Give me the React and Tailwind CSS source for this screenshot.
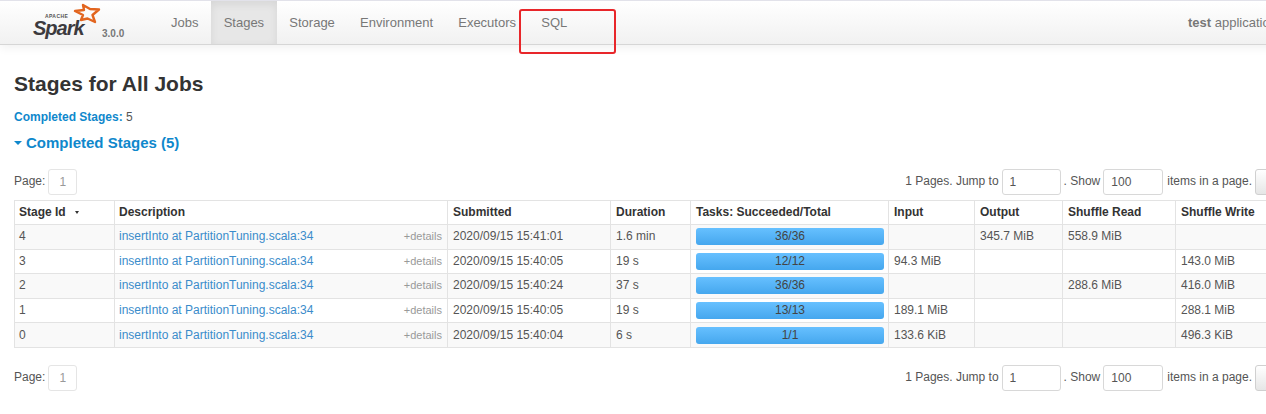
const NAV = ['Jobs', 'Stages', 'Storage', 'Environment', 'Executors', 'SQL']

const ROWS = [
  { id: 4, time: '2020/09/15 15:41:01', dur: '1.6 min', tasks: '36/36', input: '', output: '345.7 MiB', read: '558.9 MiB', write: '' },
  { id: 3, time: '2020/09/15 15:40:05', dur: '19 s', tasks: '12/12', input: '94.3 MiB', output: '', read: '', write: '143.0 MiB' },
  { id: 2, time: '2020/09/15 15:40:24', dur: '37 s', tasks: '36/36', input: '', output: '', read: '288.6 MiB', write: '416.0 MiB' },
  { id: 1, time: '2020/09/15 15:40:05', dur: '19 s', tasks: '13/13', input: '189.1 MiB', output: '', read: '', write: '288.1 MiB' },
  { id: 0, time: '2020/09/15 15:40:04', dur: '6 s', tasks: '1/1', input: '133.6 KiB', output: '', read: '', write: '496.3 KiB' },
]

function SparkLogo() {
  return (
    <svg width="72" height="36" viewBox="0 0 72 36" className="shrink-0">
      <path
        d="M54 2 L61 6 L70 6.5 L63.5 12 L66 19 L58.5 15.5 L52 17 L54 12 L46 8 L55 7 Z"
        fill="none"
        stroke="#e2651f"
        strokeWidth="2.4"
        strokeLinejoin="round"
      />
      <text x="16" y="14.5" fontSize="5" fontWeight="700" fill="#555" fontFamily="Liberation Sans, sans-serif" letterSpacing="0.4">APACHE</text>
      <text x="4" y="32" fontSize="20" fontWeight="700" fontStyle="italic" fill="#3c3a3e" fontFamily="Liberation Sans, sans-serif" letterSpacing="-1">Spark</text>
    </svg>
  )
}

function Navbar() {
  return (
    <div className="relative w-[1320px] h-[45px] flex border-t border-t-[#e2e2ea] border-b border-b-[#d6d6d6] bg-gradient-to-b from-white to-[#f1f1f1] shadow-[0_3px_9px_rgba(0,0,0,0.06)]">
      <div className="flex w-[158.4px] shrink-0 pl-[29px] pt-[2px]">
        <SparkLogo />
        <span className="mt-[23px] ml-[1px] text-[10px] font-bold text-[#777]">3.0.0</span>
      </div>
      {NAV.map((n) => (
        <div
          key={n}
          className={`px-[12.6px] pt-[14px] text-[13px] leading-[15px] text-[#777] ${n === 'Stages' ? 'bg-[#e7e7e7] text-[#555] shadow-[inset_0_3px_8px_rgba(0,0,0,0.08)]' : ''}`}
        >
          {n}
        </div>
      ))}
      <div className="ml-auto w-[132px] pt-[14px] text-[13px] leading-[15px] text-[#777] whitespace-nowrap">
        <b>test</b> application UI
      </div>
    </div>
  )
}

function Pager() {
  return (
    <div className="flex items-center h-[26px] text-[12px] text-[#555]">
      <span className="pb-[2px]">Page:</span>
      <span className="ml-[3px] w-[29px] h-[26px] flex items-center justify-center border border-[#e5e5e5] rounded-[3px] text-[#999]">1</span>
      <span className="ml-auto pb-[2px]">1 Pages. Jump to</span>
      <span className="ml-[3px] w-[59px] h-[26px] pl-[7px] flex items-center border border-[#d8d8d8] rounded-[3px]">1</span>
      <span className="ml-[3px] pb-[2px]">. Show</span>
      <span className="ml-[3px] w-[60px] h-[26px] pl-[7px] flex items-center border border-[#d8d8d8] rounded-[3px]">100</span>
      <span className="ml-[4px] pb-[2px]">items in a page.</span>
      <span className="ml-[3px] w-[59px] h-[26px] border border-[#d0d0d0] rounded-[3px] bg-gradient-to-b from-white to-[#e6e6e6]" />
    </div>
  )
}

const th = 'h-[25px] border border-[#e3e3e3] px-[5px] text-left font-bold text-[#333]'
const td = 'h-[24.6px] border border-[#e3e3e3] px-[5px] text-[#555]'

function StagesTable() {
  return (
    <table className="table-fixed w-[1300px] border-separate border-spacing-0 text-[12px] leading-[15px] rounded-[3px] [&_td]:border-l-0 [&_td]:border-t-0 [&_th]:border-l-0 [&_td:first-child]:border-l [&_th:first-child]:border-l">
      <colgroup>
        <col className="w-[101px]" />
        <col className="w-[333px]" />
        <col className="w-[163px]" />
        <col className="w-[80px]" />
        <col className="w-[198px]" />
        <col className="w-[86px]" />
        <col className="w-[88px]" />
        <col className="w-[113px]" />
        <col className="w-[138px]" />
      </colgroup>
      <thead>
        <tr>
          <th className={`${th} pl-[4px]`}>
            Stage Id
            <span className="inline-block ml-[9px] mb-[2px] w-0 h-0 border-x-[2.5px] border-x-transparent border-t-[3px] border-t-[#333]" />
          </th>
          <th className={`${th} pl-[4px]`}>Description</th>
          <th className={th}>Submitted</th>
          <th className={th}>Duration</th>
          <th className={th}>Tasks: Succeeded/Total</th>
          <th className={th}>Input</th>
          <th className={th}>Output</th>
          <th className={th}>Shuffle Read</th>
          <th className={th}>Shuffle Write</th>
        </tr>
      </thead>
      <tbody>
        {ROWS.map((r, i) => (
          <tr key={r.id} className={i % 2 === 0 ? 'bg-[#f9f9f9]' : 'bg-white'}>
            <td className={`${td} pl-[4px]`}>{r.id}</td>
            <td className={`${td} pl-[4px]`}>
              <div className="flex items-baseline justify-between">
                <span className="text-[#3a8ccb]">insertInto at PartitionTuning.scala:34</span>
                <span className="text-[11px] text-[#999]">+details</span>
              </div>
            </td>
            <td className={td}>{r.time}</td>
            <td className={td}>{r.dur}</td>
            <td className={`${td} pr-[4px]`}>
              <div className="h-[17px] rounded-[3px] bg-gradient-to-b from-[#66c0ff] to-[#45a7ee] text-center text-[12px] leading-[17px] text-[#444]">
                {r.tasks}
              </div>
            </td>
            <td className={td}>{r.input}</td>
            <td className={td}>{r.output}</td>
            <td className={td}>{r.read}</td>
            <td className={td}>{r.write}</td>
          </tr>
        ))}
      </tbody>
    </table>
  )
}

export default function App() {
  return (
    <div className="relative w-[1266px] h-[414px] overflow-hidden bg-white font-['Liberation_Sans',Arial,sans-serif]">
      <Navbar />
      <div className="w-[1300px] ml-[14px]">
        <h3 className="mt-[26px] text-[21px] leading-[25px] font-bold text-[#333]">Stages for All Jobs</h3>
        <div className="mt-[14px] text-[12px] leading-[15px] text-[#555]">
          <b className="text-[#0f88cc]">Completed Stages:</b> 5
        </div>
        <div className="mt-[9px] flex items-center text-[#0f88cc] text-[15px] leading-[18px] font-bold">
          <span className="mr-[4px] w-0 h-0 border-x-[4px] border-x-transparent border-t-[4px] border-t-[#0f88cc]" />
          Completed Stages (5)
        </div>
        <div className="mt-[17px] mb-[5px]">
          <Pager />
        </div>
        <StagesTable />
        <div className="mt-[17px]">
          <Pager />
        </div>
      </div>
      {/* red annotation drawn over the nav */}
      <div className="absolute left-[519px] top-[9px] w-[97px] h-[45px] border-2 border-[#e8262a] rounded-[3px]" />
    </div>
  )
}
